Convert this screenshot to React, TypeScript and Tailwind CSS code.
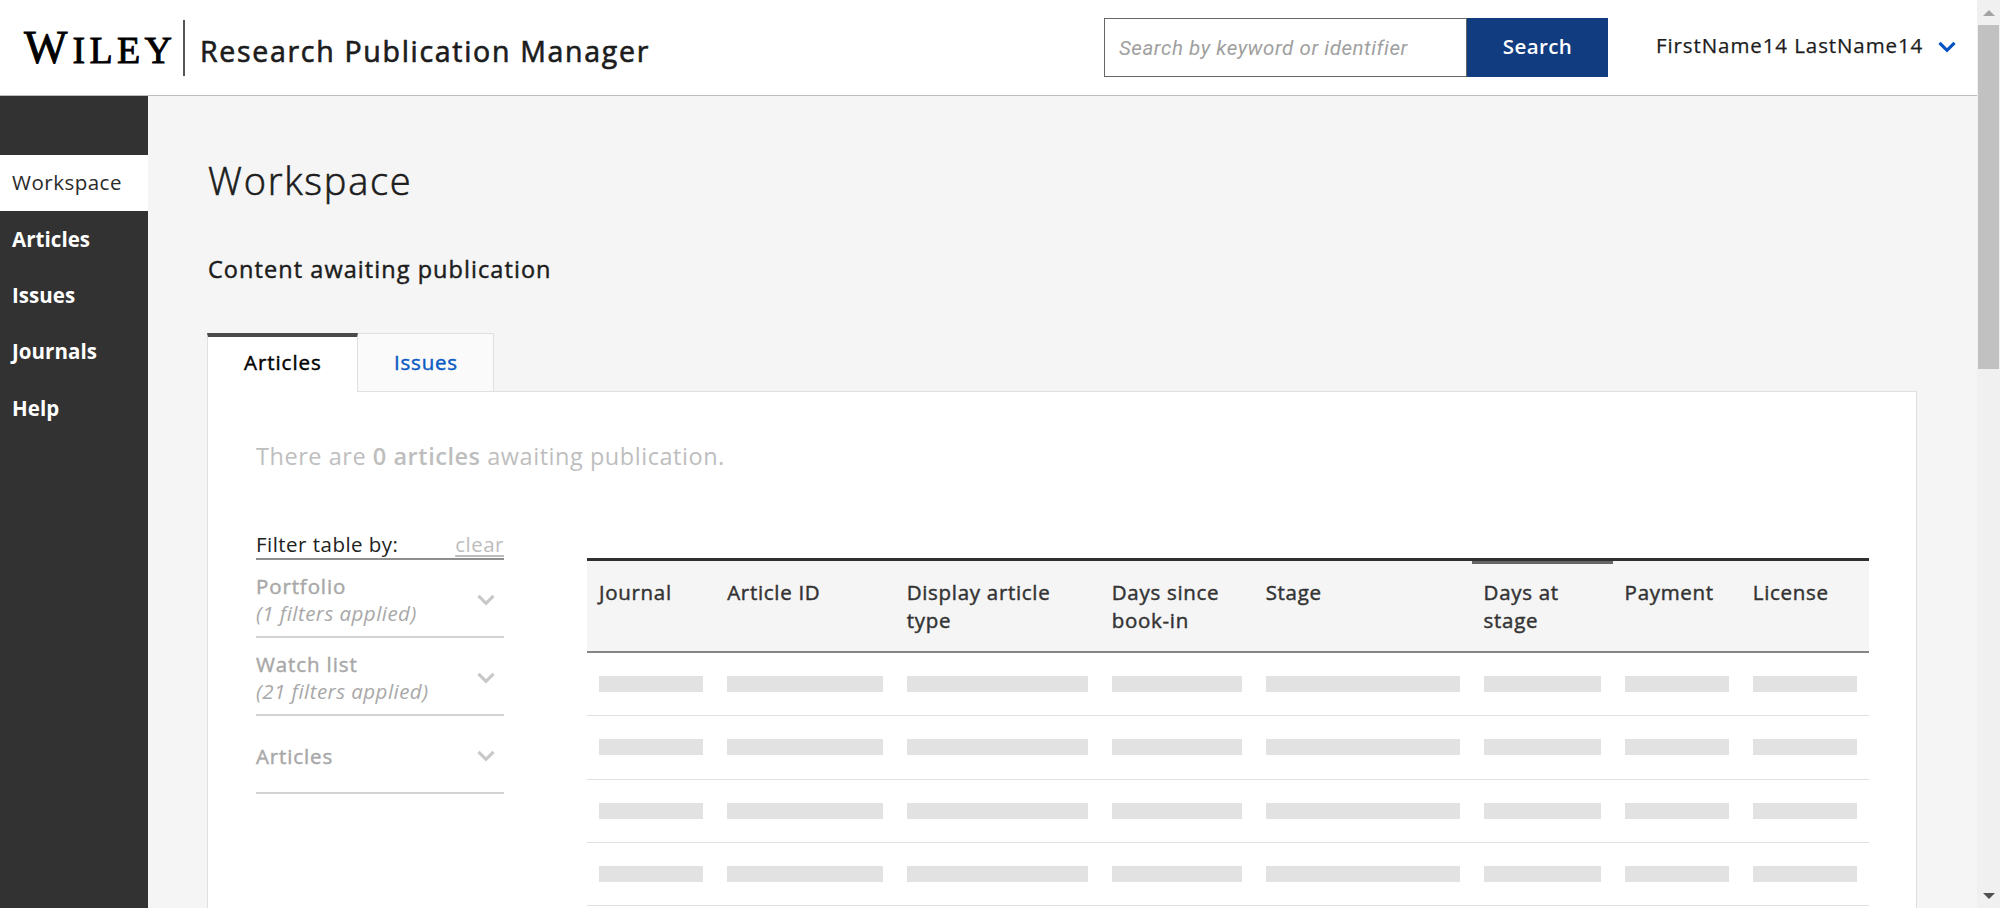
import type { ReactNode } from "react";

const COLUMNS = [
  { label: "Journal" },
  { label: "Article ID" },
  { label: "Display article type" },
  { label: "Days since book-in" },
  { label: "Stage" },
  { label: "Days at stage", sorted: true },
  { label: "Payment" },
  { label: "License" },
];

const GRID = "grid grid-cols-[10fr_14fr_16fr_12fr_17fr_11fr_10fr_10fr]";
const NAV = ["Articles", "Issues", "Journals", "Help"];
const MEDIUM = "[-webkit-text-stroke:0.45px_currentColor]";

function Chevron({ className = "" }: { className?: string }) {
  return (
    <svg viewBox="0 0 18 12" className={`h-3 w-[18px] shrink-0 ${className}`} fill="none" stroke="currentColor" strokeWidth="3.2">
      <path d="M1.5 1.8 9 9.3l7.5-7.5" />
    </svg>
  );
}

function Header() {
  return (
    <header className="flex h-24 shrink-0 border-b border-[#bcbcbc] bg-white">
      <div className="flex w-[183px] shrink-0 items-baseline pl-6 font-['Liberation_Serif',serif] text-black [-webkit-text-stroke:0.9px_currentColor]">
        <span className="text-[46px] leading-[95px]">W</span>
        <span className="ml-[5px] text-[38px] tracking-[4.3px]">ILEY</span>
      </div>
      <div className="mt-5 h-14 w-[2px] bg-[#555]" />
      <h1 className="ml-[15px] mt-[31px] whitespace-nowrap text-[28.5px] leading-10 tracking-[1.7px] [-webkit-text-stroke:0.65px_currentColor]">Research Publication Manager</h1>
      <div className="ml-auto mt-[18px] flex h-[59px] w-[504px] shrink-0">
        <div className="flex w-[363px] items-center border border-[#666] pl-[14px] pt-[2px] font-['Roboto',sans-serif] text-[20.5px] italic tracking-[0.56px] text-[#a0a0a0]">
          Search by keyword or identifier
        </div>
        <button className="flex-1 bg-[#123c80] pb-[2px] text-[20.5px] font-semibold tracking-[0.4px] text-white">Search</button>
      </div>
      <div className="ml-12 mr-px mt-[29px] flex h-8 w-[320px] shrink-0 items-center text-[20.5px] tracking-[0.91px]">
        <span className="[-webkit-text-stroke:0.25px_currentColor]">FirstName14 LastName14</span>
        <Chevron className="ml-[15px] mt-[3px] text-[#0052c2]" />
      </div>
    </header>
  );
}

function Sidebar() {
  return (
    <nav className="flex w-[148px] shrink-0 flex-col bg-[#323232] pt-[59px] text-[20.5px]">
      <div className="flex h-14 items-center bg-white pb-[2px] pl-3 tracking-[0.5px] text-[#2a2a2a]">Workspace</div>
      {NAV.map((item) => (
        <div key={item} className="flex h-[56.3px] items-center pl-3 font-bold tracking-[0.05px] text-white">{item}</div>
      ))}
    </nav>
  );
}

function Filter({ title, note }: { title: string; note?: string }) {
  return (
    <div className="flex h-[78px] items-center justify-between border-b-2 border-[#d2d2d2] pr-[9px] pt-[4px] text-[20.5px] leading-[27px] text-[#a8a8a8]">
      <div>
        <div className={`tracking-[0.88px] ${MEDIUM}`}>{title}</div>
        {note && <div className="italic tracking-[0.46px]">{note}</div>}
      </div>
      <Chevron className="text-[#c8c8c8]" />
    </div>
  );
}

function Filters() {
  return (
    <aside className="w-[248px] shrink-0 pt-px">
      <div className="flex h-[30px] justify-between border-b-2 border-[#8f8f8f] text-[20.5px] leading-[28px]">
        <span className="tracking-[0.47px] text-[#222]">Filter table by:</span>
        <span className="tracking-[0.5px] text-[#bdbdbd] underline decoration-2 underline-offset-[3px]">clear</span>
      </div>
      <Filter title="Portfolio" note="(1 filters applied)" />
      <Filter title="Watch list" note="(21 filters applied)" />
      <Filter title="Articles" />
    </aside>
  );
}

function Table() {
  return (
    <div className="mt-[29px] w-[1282px]">
      <div className={`${GRID} h-[95px] border-b-2 border-t-[3px] border-b-[#858585] border-t-[#303030] bg-[#f5f5f5]`}>
        {COLUMNS.map((c) => (
          <div key={c.label} className="relative px-3 pt-[17px] text-[20.5px] leading-[28px] tracking-[0.7px] text-[#333]">
            {c.sorted && <div className="absolute inset-x-0 top-0 h-[3px] bg-[#666]" />}
            <span className={MEDIUM}>{c.label}</span>
          </div>
        ))}
      </div>
      {[0, 1, 2, 3, 4].map((r) => (
        <div key={r} className={`${GRID} h-[63.25px] items-center border-b border-[#e0e0e0]`}>
          {COLUMNS.map((c) => (
            <div key={c.label} className="mx-3 h-4 bg-[#e2e2e2]" />
          ))}
        </div>
      ))}
    </div>
  );
}

function Tabs() {
  return (
    <div className="relative z-10 -mb-px flex h-[60px] pt-[1px] text-[20.5px]">
      <div className={`flex w-[151px] items-center border-l border-r border-t-4 border-[#e0e0e0] border-t-[#4a4a4a] bg-white pb-[4px] pl-[36px] tracking-[0.95px] text-black ${MEDIUM}`}>
        Articles
      </div>
      <div className="flex w-[136px] items-center border-y border-r border-[#e0e0e0] bg-[#fafafa] pl-[36px] tracking-[0.8px] text-[#0b5bc4]">
        <span className={MEDIUM}>Issues</span>
      </div>
    </div>
  );
}

function Scrollbar() {
  return (
    <div className="flex w-[23px] shrink-0 flex-col items-center bg-[#f0f0f0]">
      <svg viewBox="0 0 12 6" className="mt-[10px] h-[6px] w-3 shrink-0"><path d="M0 6 6 0l6 6z" fill="#a3a3a3" /></svg>
      <div className="mt-[9px] h-[344px] w-[21px] bg-[#c1c1c1]" />
      <svg viewBox="0 0 12 6" className="mb-[9px] mt-auto h-[6px] w-3 shrink-0"><path d="M0 0h12L6 6z" fill="#505050" /></svg>
    </div>
  );
}

function Frame({ children }: { children: ReactNode }) {
  return <div className="flex h-[908px] w-[2000px] overflow-hidden bg-[#f5f5f5] font-['Open_Sans',sans-serif] text-[#1c1c1c]">{children}</div>;
}

export default function App() {
  return (
    <Frame>
      <div className="flex min-w-0 flex-1 flex-col">
        <Header />
        <div className="flex min-h-0 flex-1">
          <Sidebar />
          <main className="ml-[59px] w-[1710px] overflow-hidden">
            <h2 className="mt-[58px] pl-px text-[38px] font-light leading-[52px] tracking-[1.75px] [-webkit-text-stroke:0.6px_currentColor]">Workspace</h2>
            <h3 className={`mt-[47px] pl-px text-[23.5px] leading-8 tracking-[1.06px] ${MEDIUM}`}>Content awaiting publication</h3>
            <div className="h-[47px]" />
            <Tabs />
            <section className="h-[600px] border border-[#e0e0e0] bg-white pl-12">
              <p className="pt-[48px] text-[23.5px] leading-8 tracking-[0.54px] text-[#bebebe]">
                There are <b className="font-semibold">0 articles</b> awaiting publication.
              </p>
              <div className="flex justify-between pr-[47px] pt-[57px]">
                <Filters />
                <Table />
              </div>
            </section>
          </main>
        </div>
      </div>
      <Scrollbar />
    </Frame>
  );
}
